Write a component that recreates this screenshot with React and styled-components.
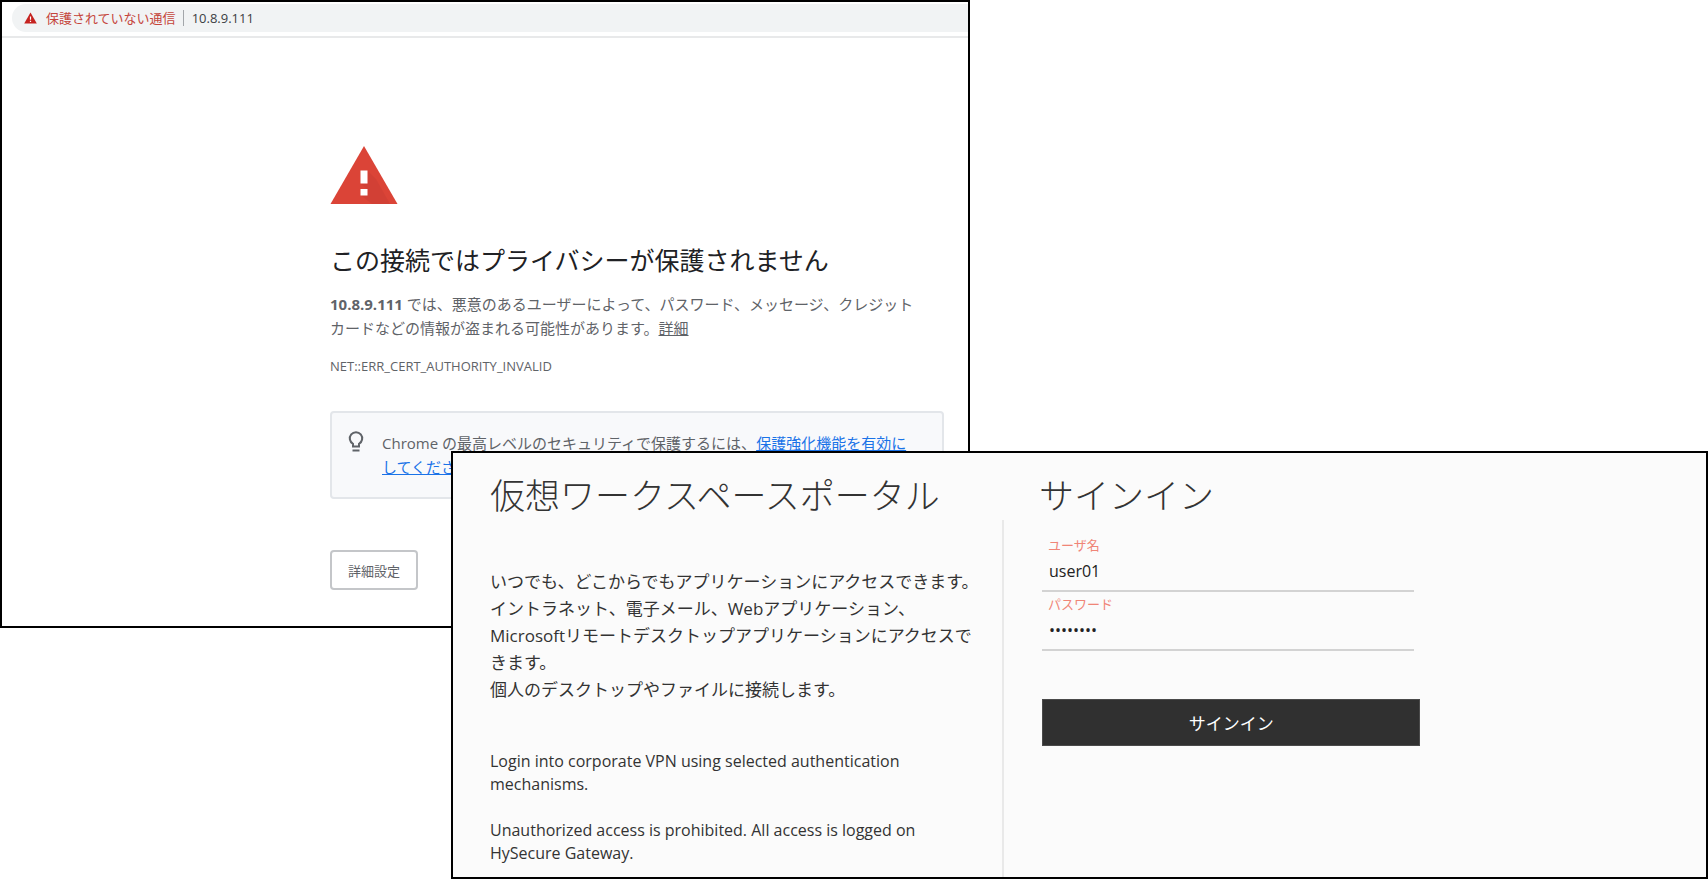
import React from 'react';
import styled, { createGlobalStyle } from 'styled-components';

const GlobalStyle = createGlobalStyle`
  *, *::before, *::after {
    box-sizing: border-box;
  }

  body {
    background: #fff;
    font-family: 'Open Sans', 'Noto Sans CJK JP', sans-serif;
    margin: 0;
  }

  h1, h2, p {
    font-weight: 400;
    margin: 0;
  }
`;

// the sign-in window overlaps the warning window in the middle cell
const Desktop = styled.main`
  display: grid;
  grid-template-columns: 451fr 519fr 738fr;
  grid-template-rows: 451px 177px auto;
`;

const Window = styled.section`
  border: 2px solid #000;
  min-width: 0;
  overflow: hidden;
`;

const WarningWindow = styled(Window)`
  background: #fff;
  grid-column: 1 / 3;
  grid-row: 1 / 3;
`;

const PortalWindow = styled(Window)`
  background: #fbfbfb;
  color: #333;
  display: grid;
  grid-column: 2 / 4;
  grid-row: 2 / 4;
  grid-template-columns: 549fr 704fr;
`;

/* ---- warning page ---- */

const Toolbar = styled.header`
  border-bottom: 2px solid #e8e9ea;
  padding: 2px 0 4px 10px;
`;

const AddressBar = styled.div`
  align-items: center;
  background: #f1f3f4;
  border-radius: 14px 0 0 14px;
  color: #3c4043;
  display: flex;
  font-size: 13px;
  gap: 8px;
  height: 28px;
  padding: 0 12px;
`;

const NotSecure = styled.span`
  align-items: center;
  border-right: 1px solid #a3a6aa;
  color: #c5453b;
  display: flex;
  gap: 9px;
  line-height: 16px;
  padding-right: 7px;
`;

const Warning = styled.div`
  color: #5f6368;
  font-size: 15px;
  line-height: 24px;
  padding: 108px 24px 0 328px;
`;

const WarningTitle = styled.h1`
  color: #202124;
  font-size: 25px;
  line-height: 32px;
  margin: 40px 0 16px;
`;

const ErrorCode = styled.p`
  font-size: 13px;
  line-height: 24px;
  margin-top: 14px;
`;

const TextLink = styled.a`
  color: ${props => props.$blue ? '#1a73e8' : 'inherit'};
  text-decoration: underline;
`;

const Tip = styled.div`
  background: #f8f9fb;
  border: 2px solid #e3e6ea;
  border-radius: 4px;
  display: flex;
  gap: 18px;
  margin-top: 33px;
  padding: 18px 16px;

  svg {
    flex: none;
  }
`;

const DetailsButton = styled.button`
  background: #fff;
  border: 2px solid #c4c6c9;
  border-radius: 4px;
  color: #5f6368;
  font: 400 13px 'Open Sans', 'Noto Sans CJK JP', sans-serif;
  height: 40px;
  margin-top: 51px;
  padding: 0 16px;
`;

/* ---- sign-in portal ---- */

const Intro = styled.div`
  display: flex;
  flex-direction: column;
  padding: 23px 0 12px 37px;
`;

const PortalTitle = styled.h2`
  font-size: 35px;
  font-weight: 300;
  line-height: 40px;
`;

const Lead = styled.p`
  font-size: 17px;
  line-height: 27px;
  margin-top: 52px;
`;

const Notice = styled.p`
  font-size: 16px;
  line-height: 23px;
  margin-top: ${props => props.$first ? 47 : 23}px;
`;

const SignInSide = styled.div`
  display: grid;
  grid-template-rows: 67px 1fr;
`;

const SignInTitle = styled(PortalTitle)`
  padding: 23px 0 0 37px;
`;

const Form = styled.form`
  border-left: 2px solid #e9e9e9;
  padding: 13px 0 0 38px;
`;

const Field = styled.div`
  border-bottom: 2px solid #d3d3d3;
  display: flex;
  flex-direction: column;
  height: 59px;
  margin-right: 44%;
  padding: 2px 6px 0;

  label {
    color: #f08577;
    font-size: 13px;
    line-height: 20px;
  }

  input {
    background: none;
    border: 0;
    color: #222;
    font: 16px 'Open Sans', sans-serif;
    height: 32px;
    outline: 0;
    padding: 0 1px;
  }
`;

const SubmitButton = styled.button`
  background: #303030;
  border: 1px solid #4a4a4a;
  color: #fff;
  display: block;
  font: 17px 'Open Sans', 'Noto Sans CJK JP', sans-serif;
  height: 47px;
  margin-top: 48px;
  width: 57%;
`;

const AlertIcon = () => (
  <svg width="13" height="12" viewBox="0 0 13 12" aria-hidden="true">
    <path d="M6.5 0.5 L12.8 11.5 H0.2 Z" fill="#c5221f" />
    <path d="M5.9 4.5 H7.1 V7.8 H5.9 Z M5.9 8.8 H7.1 V10 H5.9 Z" fill="#fff" />
  </svg>
);

const DangerSvg = styled.svg`
  display: block;
`;

const DangerIcon = () => (
  <DangerSvg width="68" height="58" viewBox="0 0 68 58" aria-hidden="true">
    <path d="M34 0 L67.5 58 H0.5 Z" fill="#db4437" />
    <path d="M37.5 24.5 L46 33 L60 58 H42 L30.5 49 L37.5 49 V43.5 L30.5 37.5 H37.5 Z" fill="#c53d31" opacity="0.4" />
    <path d="M30.5 24.5 H37.5 V37.5 H30.5 Z M30.5 43 H37.5 V49.5 H30.5 Z" fill="#fff" />
  </DangerSvg>
);

const BulbIcon = () => (
  <svg width="16" height="22" viewBox="0 0 16 22" fill="none" stroke="#5f6368" strokeWidth="2" aria-hidden="true">
    <path d="M5 15.5 V12.8 A6.2 6.2 0 1 1 11 12.8 V15.5 Z" />
    <path d="M4.5 19.5 H11.5" />
  </svg>
);

const App = () => (
  <>
    <GlobalStyle />
    <Desktop>
      <WarningWindow>
        <Toolbar>
          <AddressBar>
            <NotSecure><AlertIcon />保護されていない通信</NotSecure>
            <span>10.8.9.111</span>
          </AddressBar>
        </Toolbar>
        <Warning>
          <DangerIcon />
          <WarningTitle>この接続ではプライバシーが保護されません</WarningTitle>
          <p>
            <b>10.8.9.111</b> では、悪意のあるユーザーによって、パスワード、メッセージ、クレジット<br />
            カードなどの情報が盗まれる可能性があります。<TextLink href="#details">詳細</TextLink>
          </p>
          <ErrorCode>NET::ERR_CERT_AUTHORITY_INVALID</ErrorCode>
          <Tip>
            <BulbIcon />
            <p>
              Chrome の最高レベルのセキュリティで保護するには、<TextLink $blue href="#protection">保護強化機能を有効に<br />してください</TextLink>
            </p>
          </Tip>
          <DetailsButton type="button">詳細設定</DetailsButton>
        </Warning>
      </WarningWindow>

      <PortalWindow>
        <Intro>
          <PortalTitle>仮想ワークスペースポータル</PortalTitle>
          <Lead>
            いつでも、どこからでもアプリケーションにアクセスできます。<br />
            イントラネット、電子メール、Webアプリケーション、<br />
            Microsoftリモートデスクトップアプリケーションにアクセスで<br />
            きます。<br />
            個人のデスクトップやファイルに接続します。
          </Lead>
          <Notice $first>
            Login into corporate VPN using selected authentication<br />
            mechanisms.
          </Notice>
          <Notice>
            Unauthorized access is prohibited. All access is logged on<br />
            HySecure Gateway.
          </Notice>
        </Intro>
        <SignInSide>
          <SignInTitle>サインイン</SignInTitle>
          <Form onSubmit={e => e.preventDefault()}>
            <Field>
              <label htmlFor="user">ユーザ名</label>
              <input id="user" type="text" defaultValue="user01" />
            </Field>
            <Field>
              <label htmlFor="password">パスワード</label>
              <input id="password" type="password" defaultValue="password" />
            </Field>
            <SubmitButton type="submit">サインイン</SubmitButton>
          </Form>
        </SignInSide>
      </PortalWindow>
    </Desktop>
  </>
);

export default App;
